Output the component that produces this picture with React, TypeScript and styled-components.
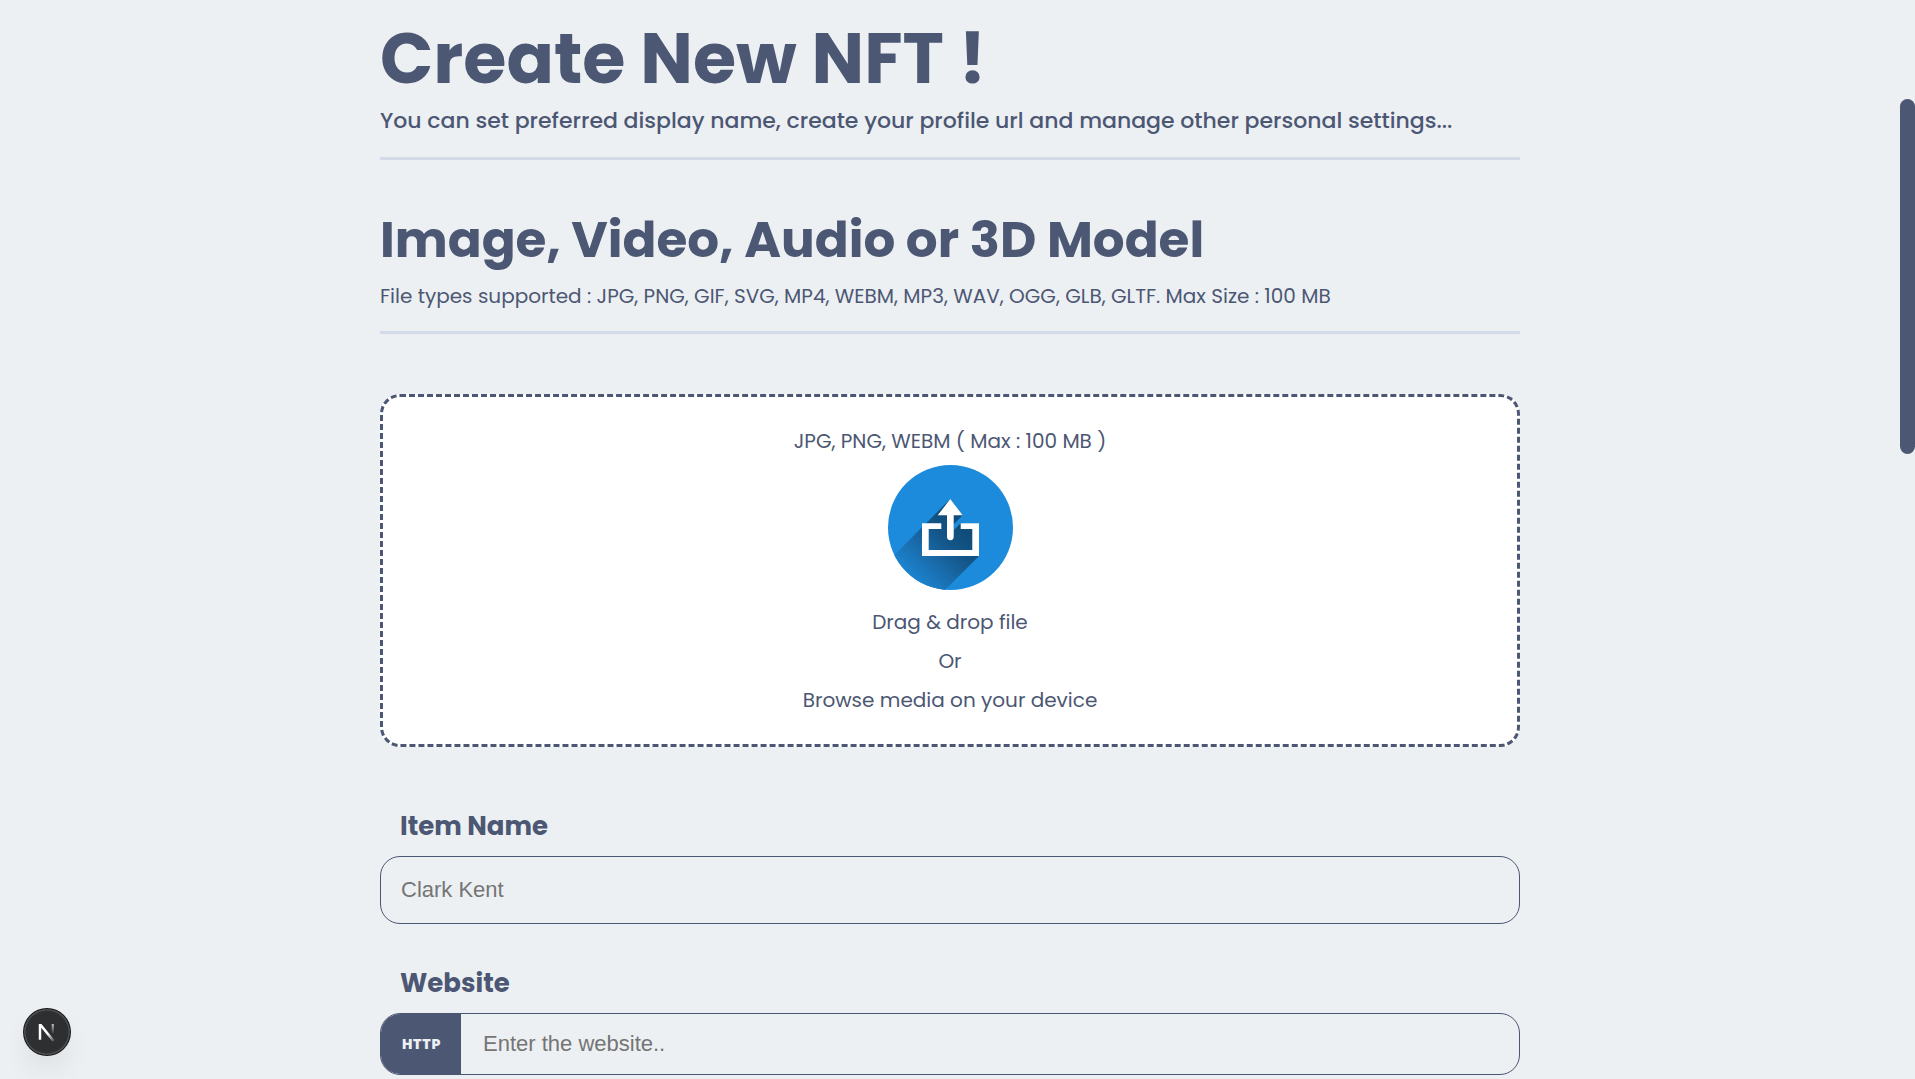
import React from "react";
import styled, { createGlobalStyle } from "styled-components";

const ink = "#4c5773";
const surface = "#ecf0f3";
const rule = "#d3dae8";

const GlobalStyle = createGlobalStyle`
  *, *::before, *::after { box-sizing: border-box; margin: 0; padding: 0; }
  body {
    background: ${surface};
    color: ${ink};
    font-family: Poppins, Inter, sans-serif;
    overflow: hidden;
  }
`;

const Page = styled.div`
  height: 1079px;
  overflow: hidden;
`;

const Content = styled.main`
  display: flex;
  flex-direction: column;
  width: 1140px;
  margin-left: 380px;
  padding-top: 24px;
`;

const Heading = styled.header<{ $top?: number }>`
  margin-top: ${(p) => p.$top ?? 0}px;
  padding-bottom: 20px;
  border-bottom: 3px solid ${rule};
`;

const Title = styled.h1`
  font-size: 70px;
  line-height: 70px;
  font-weight: 700;
  margin-bottom: 10px;
`;

const Lead = styled.p`
  font-size: 22px;
  line-height: 33px;
  font-weight: 500;
`;

const SectionTitle = styled.h2`
  font-size: 50px;
  line-height: 50px;
  font-weight: 700;
  margin-bottom: 16px;
`;

const Text = styled.p`
  font-size: 20px;
  line-height: 30px;
  font-weight: 400;
`;

const DropZone = styled.section`
  display: flex;
  flex-direction: column;
  align-items: center;
  height: 353px;
  margin-top: 60px;
  padding-top: 29px;
  border: 3px dashed ${ink};
  border-radius: 20px;
  background: #fff;
`;

const UploadArt = styled.svg`
  display: block;
  width: 125px;
  height: 125px;
  margin: 9px 0 17px;
`;

const DropSteps = styled.div`
  display: flex;
  flex-direction: column;
  align-items: center;
  gap: 9px;
`;

const Field = styled.div<{ $top: number }>`
  display: flex;
  flex-direction: column;
  gap: 10px;
  margin-top: ${(p) => p.$top}px;
`;

const Label = styled.label`
  padding-left: 20px;
  font-size: 26px;
  line-height: 39px;
  font-weight: 700;
`;

const InputBox = styled.div<{ $height: number }>`
  display: flex;
  align-items: stretch;
  height: ${(p) => p.$height}px;
  border: 1px solid ${ink};
  border-radius: 20px;
  overflow: hidden;
`;

const Input = styled.input<{ $inset: number }>`
  flex: 1;
  min-width: 0;
  border: 0;
  outline: 0;
  background: transparent;
  padding: 0 ${(p) => p.$inset}px;
  font-family: Arial, "Liberation Sans", sans-serif;
  font-size: 22px;
  color: ${ink};
  &::placeholder { color: #757575; opacity: 1; }
`;

const Prefix = styled.span`
  display: flex;
  align-items: center;
  justify-content: center;
  width: 80px;
  padding-left: 1px;
  background: ${ink};
  color: ${surface};
  font-size: 14px;
  font-weight: 800;
  letter-spacing: 0.7px;
`;

const ScrollThumb = styled.div`
  position: fixed;
  top: 99px;
  right: 0;
  width: 15px;
  height: 355px;
  border-radius: 10px;
  background: ${ink};
`;

const DevBadge = styled.div`
  position: fixed;
  left: 24px;
  top: 1009px;
  display: grid;
  place-items: center;
  width: 46px;
  height: 46px;
  border-radius: 50%;
  background: #2d2f31;
  box-shadow: 0 0 0 1px #141516, inset 0 0 0 1.5px rgba(255, 255, 255, 0.16),
    0 16px 32px -8px rgba(0, 0, 0, 0.14);
`;

function UploadIcon() {
  return (
    <UploadArt viewBox="0 0 125 125" aria-hidden="true">
      <defs>
        <clipPath id="disc">
          <circle cx="62.5" cy="62.5" r="62.5" />
        </clipPath>
        <linearGradient id="fade" gradientUnits="userSpaceOnUse" x1="76" y1="64" x2="24" y2="116">
          <stop offset="0" stopColor="#0f4c79" />
          <stop offset="0.3" stopColor="#145689" />
          <stop offset="0.6" stopColor="#196baa" />
          <stop offset="1" stopColor="#1c86d3" />
        </linearGradient>
      </defs>
      <g clipPath="url(#disc)">
        <rect width="125" height="125" fill="#1c8bdc" />
        <path
          d="M62.3 34 L74.7 50.3 L66 59 V65 L72.7 58.3 H91 V91 L31 151 L-30 126.3 Z"
          fill="url(#fade)"
        />
      </g>
      <path
        d="M53.3 58.3 H34 V91 H91 V58.3 H72.7 V64 H84.3 V85 H40.7 V64 H53.3 Z"
        fill="#fff"
      />
      <path
        d="M62.3 34 L74.7 50.3 H65.7 V71.8 A3.35 3.35 0 0 1 59 71.8 V50.3 H49.7 Z"
        fill="#fff"
      />
    </UploadArt>
  );
}

function NextIcon() {
  return (
    <svg width="20" height="20" viewBox="0 0 18 18" fill="none" aria-hidden="true">
      <defs>
        <linearGradient id="stem" x1="0" y1="1" x2="0" y2="11" gradientUnits="userSpaceOnUse">
          <stop stopColor="#fff" stopOpacity="0.75" />
          <stop offset="1" stopColor="#fff" stopOpacity="0" />
        </linearGradient>
        <linearGradient id="tail" x1="10" y1="10" x2="15.5" y2="17" gradientUnits="userSpaceOnUse">
          <stop stopColor="#fff" />
          <stop offset="1" stopColor="#fff" stopOpacity="0.15" />
        </linearGradient>
      </defs>
      <rect x="13.2" y="1.8" width="2" height="11" fill="url(#stem)" />
      <path d="M1.6 16 V1.8 H4 L15.8 16.4 L14 17.8 L3.8 5.2 V16 Z" fill="url(#tail)" />
    </svg>
  );
}

export default function App() {
  return (
    <>
      <GlobalStyle />
      <Page>
        <Content>
          <Heading>
            <Title>Create New NFT !</Title>
            <Lead>
              You can set preferred display name, create your profile url and manage other personal
              settings...
            </Lead>
          </Heading>
          <Heading $top={55}>
            <SectionTitle>Image, Video, Audio or 3D Model</SectionTitle>
            <Text>
              File types supported : JPG, PNG, GIF, SVG, MP4, WEBM, MP3, WAV, OGG, GLB, GLTF. Max
              Size : 100 MB
            </Text>
          </Heading>
          <DropZone>
            <Text>JPG, PNG, WEBM ( Max : 100 MB )</Text>
            <UploadIcon />
            <DropSteps>
              <Text>Drag &amp; drop file</Text>
              <Text>Or</Text>
              <Text>Browse media on your device</Text>
            </DropSteps>
          </DropZone>
          <Field $top={60}>
            <Label htmlFor="item-name">Item Name</Label>
            <InputBox $height={68}>
              <Input id="item-name" $inset={20} placeholder="Clark Kent" />
            </InputBox>
          </Field>
          <Field $top={40}>
            <Label htmlFor="website">Website</Label>
            <InputBox $height={62}>
              <Prefix>HTTP</Prefix>
              <Input id="website" $inset={22} placeholder="Enter the website.." />
            </InputBox>
          </Field>
        </Content>
      </Page>
      <ScrollThumb />
      <DevBadge>
        <NextIcon />
      </DevBadge>
    </>
  );
}
